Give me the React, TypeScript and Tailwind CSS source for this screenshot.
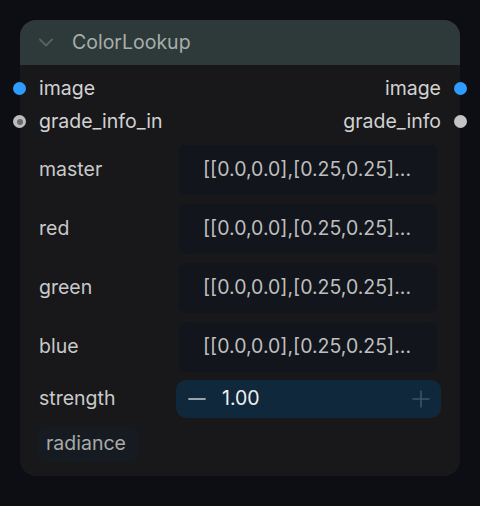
import React from 'react'

const curve = '[[0.0,0.0],[0.25,0.25]...'

function CurveRow({ label }: { label: string }) {
  return (
    <div className="flex items-center h-[50px]">
      <div className="flex-1 text-[19.5px] text-[#c9c9c9]">{label}</div>
      <div className="w-[260px] h-full mr-[22px] rounded-lg bg-[#12151b] flex items-center pl-[25px] text-[19.5px] text-[#bfbfbf] whitespace-nowrap overflow-hidden">
        {curve}
      </div>
    </div>
  )
}

export default function App() {
  return (
    <div
      className="min-h-screen bg-[#0c0e13] pt-[20px] pl-[20px]"
      style={{ fontFamily: "Inter, 'Noto Sans', sans-serif" }}
    >
      <div className="relative w-[440px] h-[456px] rounded-[16px] bg-[#18181b]">
        {/* Header */}
        <div className="h-[45px] rounded-t-[16px] bg-[#2e3a39] flex items-center pl-[19px]">
          <svg width="14" height="9" viewBox="0 0 14 9" fill="none" className="mr-[19px]">
            <path d="M1 1.5 L7 7.5 L13 1.5" stroke="#566461" strokeWidth="1.8" strokeLinecap="round" strokeLinejoin="round" />
          </svg>
          <span className="text-[19.5px] text-[#a6aeac]">ColorLookup</span>
        </div>

        {/* Slots */}
        <div className="pt-[7px]">
          <div className="relative flex items-center justify-between h-[33px] pl-[19px] pr-[19px] text-[19.5px] text-[#d2d2d2]">
            <span className="absolute left-[-7px] top-[10px] w-[13px] h-[13px] rounded-full bg-[#2f9bff]" />
            <span>image</span>
            <span>image</span>
            <span className="absolute right-[-7px] top-[10px] w-[13px] h-[13px] rounded-full bg-[#2f9bff]" />
          </div>
          <div className="relative flex items-center justify-between h-[33px] pl-[19px] pr-[19px] text-[19.5px] text-[#d2d2d2]">
            <span className="absolute left-[-7px] top-[10px] w-[13px] h-[13px] rounded-full bg-[#bdbdbd] flex items-center justify-center">
              <span className="w-[6px] h-[6px] rounded-full bg-[#6b6b6b]" />
            </span>
            <span>grade_info_in</span>
            <span>grade_info</span>
            <span className="absolute right-[-7px] top-[10px] w-[13px] h-[13px] rounded-full bg-[#c4c4c4]" />
          </div>
        </div>

        {/* Widgets */}
        <div className="flex flex-col gap-[9px] pl-[19px] mt-[7px]">
          <CurveRow label="master" />
          <CurveRow label="red" />
          <CurveRow label="green" />
          <CurveRow label="blue" />
        </div>

        <div className="flex items-center h-[38px] pl-[19px] mt-[8px]">
          <div className="flex-1 text-[19.5px] text-[#c9c9c9]">strength</div>
          <div className="w-[265px] h-full mr-[19px] rounded-[10px] bg-[#10283c] flex items-center pl-[12px] pr-[11px]">
            <svg width="18" height="18" viewBox="0 0 18 18" fill="none">
              <path d="M1 9 H17" stroke="#9aa3ab" strokeWidth="1.8" strokeLinecap="round" />
            </svg>
            <span className="ml-[16px] text-[19.5px] text-[#f0f0f0]">1.00</span>
            <svg width="18" height="18" viewBox="0 0 18 18" fill="none" className="ml-auto">
              <path d="M1 9 H17 M9 1 V17" stroke="#3e5466" strokeWidth="1.6" strokeLinecap="round" />
            </svg>
          </div>
        </div>

        <div className="pl-[17px] mt-[8px]">
          <div className="inline-flex items-center h-[36px] pl-[9px] pr-[13px] rounded-lg bg-[#161b21] text-[19.5px] text-[#a9a9a9]">
            radiance
          </div>
        </div>
      </div>
    </div>
  )
}
